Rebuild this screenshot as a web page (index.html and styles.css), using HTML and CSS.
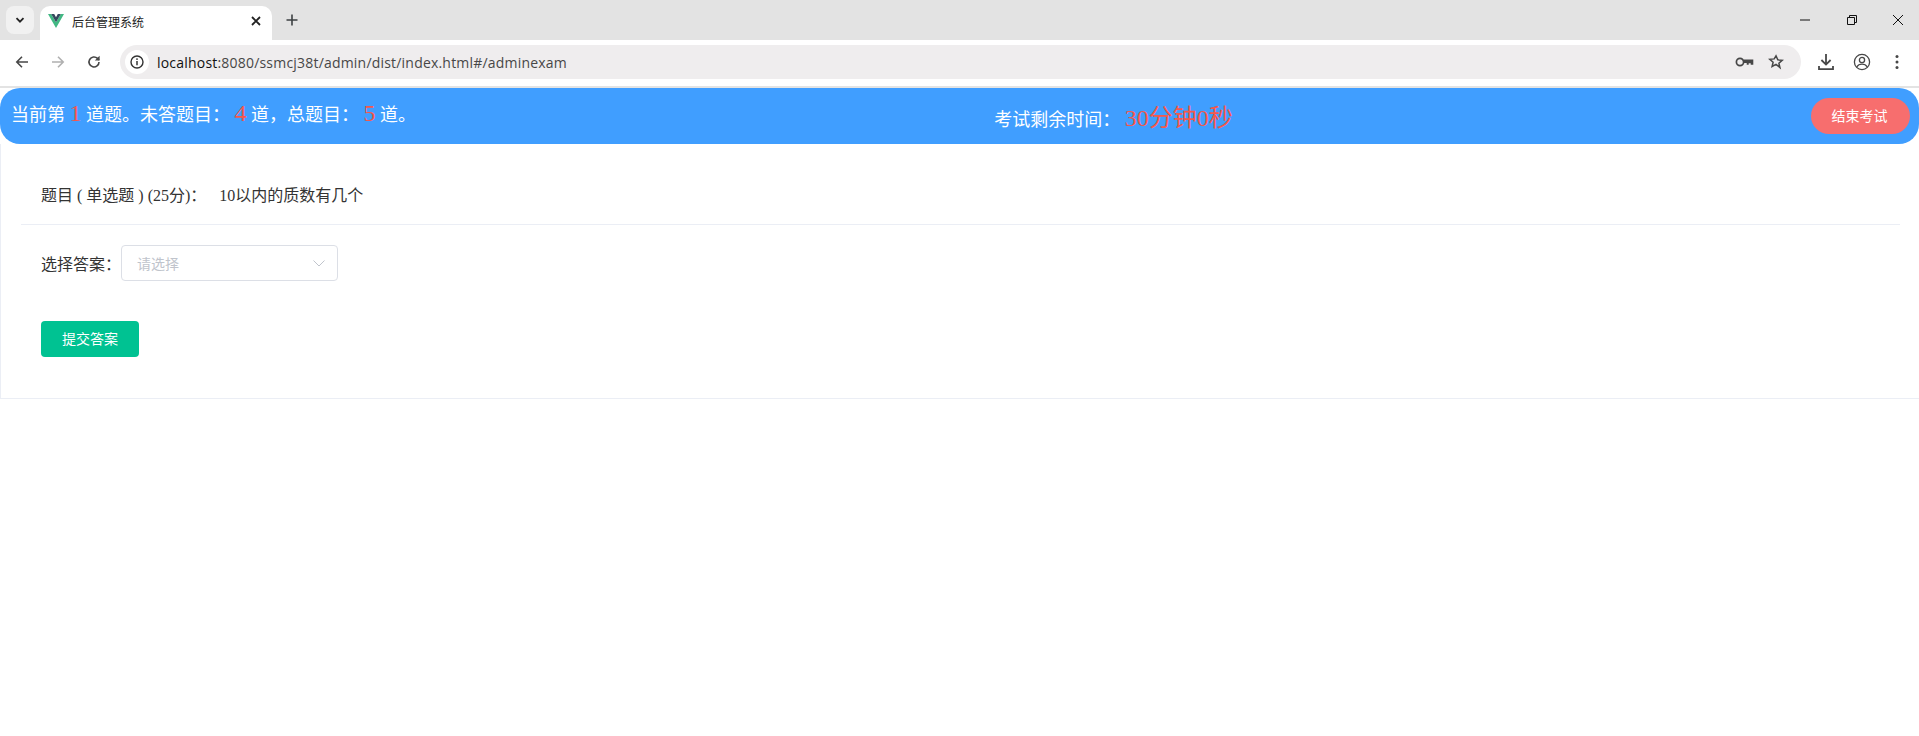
FILE: index.html
```html
<!DOCTYPE html>
<html lang="zh-CN">
<head>
<meta charset="utf-8">
<title>后台管理系统</title>
<link rel="stylesheet" href="styles.css">
</head>
<body>
<div class="tabstrip">
  <div class="tabsearch"><svg width="12" height="12" viewBox="0 0 12 12"><path d="M2.5 4.2 6 7.7l3.5-3.5" class="ic-bold"/></svg></div>
  <div class="tab">
    <svg class="favicon" width="16" height="14" viewBox="0 0 16 14"><path d="M0 0h3.2L8 8.2 12.8 0H16L8 14z" fill="#41b883"/><path d="M3.2 0h3L8 3.2 9.8 0h3L8 8.2z" fill="#35495e"/></svg>
    <span class="tabtitle">后台管理系统</span>
    <svg class="tabclose" width="12" height="12" viewBox="0 0 12 12"><path d="M2 2l8 8M10 2l-8 8" class="ic-bold"/></svg>
  </div>
  <svg class="newtab" width="14" height="14" viewBox="0 0 14 14"><path d="M7 1.5v11M1.5 7h11" stroke="#3c4043" stroke-width="1.6" fill="none"/></svg>
  <div class="winctl">
    <svg width="12" height="12" viewBox="0 0 12 12"><path d="M1 6h10" stroke="#111" fill="none"/></svg>
    <svg width="12" height="12" viewBox="0 0 12 12"><path d="M1.5 3.5h7v7h-7zM3.5 3.5v-2h7v7h-2" stroke="#111" fill="none"/></svg>
    <svg width="12" height="12" viewBox="0 0 12 12"><path d="M1 1l10 10M11 1L1 11" stroke="#111" fill="none"/></svg>
  </div>
</div>
<div class="toolbar">
  <svg class="nav" width="16" height="16" viewBox="0 0 16 16"><path d="M14 8H3M8 2.8 2.8 8 8 13.2" stroke="#474747" stroke-width="1.6" fill="none"/></svg>
  <svg class="nav" width="16" height="16" viewBox="0 0 16 16"><path d="M2 8h11M8 2.8 13.2 8 8 13.2" stroke="#b0b0b0" stroke-width="1.6" fill="none"/></svg>
  <svg class="nav" width="16" height="16" viewBox="0 0 16 16"><path d="M13 8a5 5 0 1 1-1.5-3.6L13 6" stroke="#474747" stroke-width="1.6" fill="none"/><path d="M13.6 1.8v4.8H8.8z" fill="#474747"/></svg>
  <div class="omnibox">
    <div class="siteinfo"><svg width="14" height="14" viewBox="0 0 14 14"><circle cx="7" cy="7" r="6" stroke="#333" stroke-width="1.4" fill="none"/><path d="M7 6v4.2" stroke="#333" stroke-width="1.5"/><circle cx="7" cy="4.1" r=".9" fill="#333"/></svg></div>
    <span class="url"><span class="host">localhost</span>:8080/ssmcj38t/admin/dist/index.html#/adminexam</span>
    <div class="omni-actions">
      <svg width="19" height="12" viewBox="0 0 19 12"><circle cx="5" cy="6" r="3.6" stroke="#474747" stroke-width="1.7" fill="none"/><path d="M8.5 3.6h9.8v5.2h-2.6V7.2h-2v1.6h-2V6.9H8.5z" fill="#474747"/></svg>
      <svg width="16" height="16" viewBox="0 0 16 16"><path d="M8 1.8l1.8 4.1 4.4.4-3.3 2.9 1 4.3L8 10.3l-3.9 2.2 1-4.3-3.3-2.9 4.4-.4z" stroke="#474747" stroke-width="1.5" fill="none"/></svg>
    </div>
  </div>
  <div class="tb-actions">
    <svg width="16" height="18" viewBox="0 0 16 18"><path d="M8 1v10M3.4 7 8 11.6 12.6 7" stroke="#474747" stroke-width="1.8" fill="none"/><path d="M1 13v3.2h14V13" stroke="#474747" stroke-width="1.8" fill="none"/></svg>
    <svg width="18" height="18" viewBox="0 0 18 18"><circle cx="9" cy="9" r="7.6" stroke="#474747" stroke-width="1.3" fill="none"/><circle cx="9" cy="7" r="2.6" stroke="#474747" stroke-width="1.3" fill="none"/><path d="M3.8 14c1.2-2 3-2.8 5.2-2.8s4 .8 5.2 2.8" stroke="#474747" stroke-width="1.3" fill="none"/></svg>
    <svg class="menu" width="4" height="16" viewBox="0 0 4 16"><circle cx="2" cy="2.5" r="1.5" fill="#474747"/><circle cx="2" cy="8" r="1.5" fill="#474747"/><circle cx="2" cy="13.5" r="1.5" fill="#474747"/></svg>
  </div>
</div>
<main class="page">
  <header class="exambar">
    <div class="progress">当前第 <span class="num">1</span> 道题。未答题目： <span class="num">4</span> 道，总题目： <span class="num">5</span> 道。</div>
    <div class="timer">考试剩余时间： <span class="num time">30分钟0秒</span></div>
    <button class="endbtn">结束考试</button>
  </header>
  <section class="card">
    <div class="question">题目 ( 单选题 ) (25分)： <span class="qtext">10以内的质数有几个</span></div>
    <div class="answer">
      <span class="label">选择答案：</span>
      <div class="select"><span class="placeholder">请选择</span><svg width="14" height="14" viewBox="0 0 14 14"><path d="M1.5 4.5 7 10l5.5-5.5" stroke="#c0c4cc" fill="none"/></svg></div>
    </div>
    <button class="submit">提交答案</button>
  </section>
</main>
</body>
</html>
```
FILE: styles.css
```css
* { box-sizing: border-box; }
html, body { margin: 0; padding: 0; background: #fff; }
body { width: 1919px; height: 736px; overflow: hidden; font-family: "Liberation Serif", "Noto Sans CJK SC", serif; color: #333; }
.ic-bold { stroke: #222; stroke-width: 1.8; fill: none; }

.tabstrip { height: 40px; background: #e3e3e3; display: flex; align-items: flex-start; }
.tabsearch { width: 28px; height: 28px; margin: 6px 0 0 6px; border-radius: 8px; background: #f1f1f1; display: flex; align-items: center; justify-content: center; }
.tab { width: 232px; height: 34px; margin: 6px 0 0 6px; padding: 0 10px 4px 8px; background: #fff; border-radius: 10px 10px 0 0; display: flex; align-items: center; }
.favicon { flex: none; }
.tabtitle { flex: 1; margin-left: 8px; font: 12px "Noto Sans CJK SC", sans-serif; color: #222; }
.newtab { margin: 13px 0 0 13px; }
.winctl { margin-left: auto; width: 120px; display: flex; justify-content: space-between; padding: 14px 15px 0 0; }
.winctl svg { flex: none; }

.toolbar { height: 48px; background: #fff; border-radius: 8px 8px 0 0; border-bottom: 2px solid #e3e3e3; display: flex; align-items: center; padding: 0 0 2px 14px; }
.toolbar .nav { margin-right: 20px; flex: none; }
.omnibox { width: 1681px; height: 34px; margin-left: -2px; border-radius: 17px; background: #efedee; display: flex; align-items: center; padding: 0 17px 0 5px; flex: none; }
.siteinfo { width: 24px; height: 24px; border-radius: 50%; background: #fff; display: flex; align-items: center; justify-content: center; }
.url { margin-left: 8px; font: 14px "Open Sans", sans-serif; letter-spacing: .2px; color: #474747; }
.host { color: #111; }
.omni-actions { margin-left: auto; display: flex; align-items: center; gap: 14px; }
.tb-actions { display: flex; align-items: center; flex: 1; padding-left: 17px; gap: 19px; }
.menu { margin-left: 5px; }

.exambar { height: 56px; background: #409eff; border-radius: 20px; color: #fff; font-size: 18px; display: flex; align-items: center; justify-content: space-between; padding: 0 9px 0 11px; }
.progress { margin-bottom: 5px; }
.timer { margin-bottom: 2px; }
.num { color: #f5584c; font-size: 24px; }
.endbtn { width: 99px; height: 36px; border: 0; border-radius: 18px; background: #f76e6e; color: #fff; font: 14px "Noto Sans CJK SC", sans-serif; padding: 0 2px 2px 0; }

.card { height: 255px; border-left: 1px solid #ebeef5; border-bottom: 1px solid #ebeef5; padding: 0 20px; }
.question { height: 81px; padding: 20px 0 0 20px; margin-right: -1px; border-bottom: 1px solid #ebeef5; display: flex; align-items: center; font-size: 16px; color: #333; white-space: pre; }
.qtext { margin-left: 9px; }
.answer { display: flex; align-items: center; margin: 20px 0 0 20px; height: 36px; font-size: 16px; }
.label { width: 80px; font-family: "Noto Sans CJK SC", sans-serif; }
.select { width: 217px; height: 36px; border: 1px solid #dcdfe6; border-radius: 4px; display: flex; align-items: center; justify-content: space-between; padding: 0 11px 0 15px; }
.placeholder { font: 14px "Noto Sans CJK SC", sans-serif; color: #c0c4cc; }
.submit { display: block; width: 98px; height: 36px; margin: 40px 0 0 20px; border: 0; border-radius: 4px; background: #00c292; color: #fff; font: 14px "Noto Sans CJK SC", sans-serif; padding: 0 0 2px; }
```
